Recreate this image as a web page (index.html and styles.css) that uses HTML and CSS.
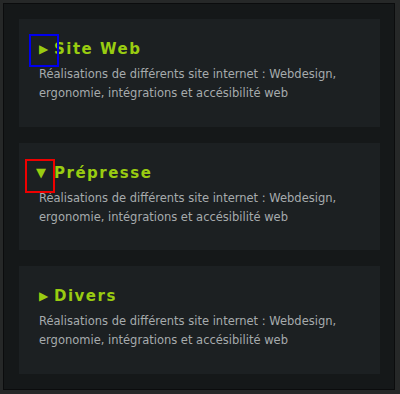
FILE: index.html
```html
<!DOCTYPE html>
<html lang="fr">

<head>
  <meta charset="UTF-8">
  <meta name="viewport" content="width=device-width, initial-scale=1.0">
  <title>Réalisations</title>
  <link rel="stylesheet" href="styles.css">
</head>

<body>
  <div class="wrapper">
    <div class="panel">
      <h2 class="panel-title"><span class="arrow">&#9654;</span>Site Web</h2>
      <p class="panel-text">Réalisations de différents site internet : Webdesign, ergonomie, intégrations et accésibilité web</p>
      <span class="marker marker-blue"></span>
    </div>
    <div class="panel">
      <h2 class="panel-title"><span class="arrow arrow-down">&#9660;</span>Prépresse</h2>
      <p class="panel-text">Réalisations de différents site internet : Webdesign, ergonomie, intégrations et accésibilité web</p>
      <span class="marker marker-red"></span>
    </div>
    <div class="panel">
      <h2 class="panel-title"><span class="arrow">&#9654;</span>Divers</h2>
      <p class="panel-text">Réalisations de différents site internet : Webdesign, ergonomie, intégrations et accésibilité web</p>
    </div>
  </div>
</body>

</html>
```

FILE: styles.css
```css
body {
  margin: 0;
  background-color: #262828;
  font-family: "DejaVu Sans", Verdana, sans-serif;
}

.wrapper {
  box-sizing: border-box;
  width: 392px;
  height: 387px;
  margin: 3px 0 0 3px;
  padding: 15px 14px 15px 15px;
  border: 1px solid #0b0c0d;
  background-color: #151819;
  display: flex;
  flex-direction: column;
  gap: 16px;
}

.panel {
  position: relative;
  flex: 1;
  padding: 20px 20px 0 20px;
  background-color: #1c2022;
}

.panel-title {
  display: flex;
  align-items: center;
  margin: 0;
  font-size: 15px;
  line-height: 20px;
  font-weight: bold;
  letter-spacing: 1.5px;
  color: #99cc11;
}

.arrow {
  font-size: 12px;
  letter-spacing: 0;
  width: 15px;
}

.arrow-down {
  font-size: 13px;
  margin-left: -3px;
  width: 18px;
}

.panel-text {
  margin: 6px 0 0 0;
  font-size: 11.5px;
  line-height: 19px;
  color: #a6abad;
}

.marker {
  position: absolute;
  box-sizing: border-box;
  border: 2px solid;
}

.marker-blue {
  left: 10px;
  top: 15px;
  width: 30px;
  height: 33px;
  border-color: #0000ee;
}

.marker-red {
  left: 6px;
  top: 16px;
  width: 30px;
  height: 34px;
  border-color: #ee0000;
}
```
